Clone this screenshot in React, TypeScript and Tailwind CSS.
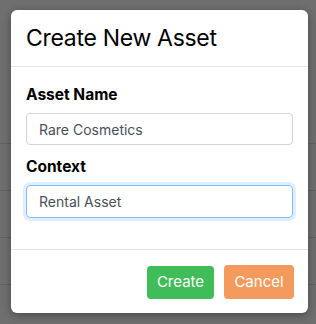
import React from 'react';

const rows = [0, 1, 2, 3, 4, 5, 6];

export default function App() {
    return (
        <div className="relative w-[316px] h-[324px] overflow-hidden bg-[#6f6f6f]" style={{ fontFamily: 'Inter, "Liberation Sans", sans-serif' }}>
            {/* backdrop table rows */}
            <div className="absolute inset-0 flex flex-col pt-[97px]">
                {rows.map((r) => (
                    <div key={r} className="h-[47px] shrink-0 border-b border-[#626262]" />
                ))}
            </div>

            {/* Modal */}
            <div className="absolute left-[11px] top-[10px] w-[297px] bg-white rounded-[6px] shadow-[0_2px_8px_rgba(0,0,0,0.35)]">
                <div className="px-[15px] py-[16px] border-b border-[#e5e5e5]">
                    <h5 className="text-[23px] leading-[24px] text-black font-normal tracking-[-0.3px]">Create New Asset</h5>
                </div>

                <div className="px-[15px] pt-[17px] pb-[31px]">
                    <label className="block text-[15.5px] leading-[22px] font-bold text-black mb-[7px]">Asset Name</label>
                    <input
                        readOnly
                        value="Rare Cosmetics"
                        className="block w-full h-[32px] px-[12px] text-[14px] text-[#495057] border border-[#ced4da] rounded-[4px] outline-none"
                    />
                    <label className="block text-[15.5px] leading-[22px] font-bold text-black mt-[11px] mb-[7px]">Context</label>
                    <input
                        readOnly
                        value="Rental Asset"
                        className="block w-full h-[33px] px-[12px] text-[14px] text-[#495057] border border-[#80bdff] rounded-[4px] outline-none shadow-[0_0_0_3px_rgba(0,123,255,0.12)]"
                    />
                </div>

                <div className="flex items-center justify-end gap-[10px] px-[14px] pt-[15px] pb-[14px] border-t border-[#e5e5e5]">
                    <button className="h-[33px] w-[67px] rounded-[4px] bg-[#3fbd58] text-white text-[15px]">Create</button>
                    <button className="h-[34px] w-[70px] rounded-[4px] bg-[#f39a5c] text-white text-[15px]">Cancel</button>
                </div>
            </div>
        </div>
    );
}
